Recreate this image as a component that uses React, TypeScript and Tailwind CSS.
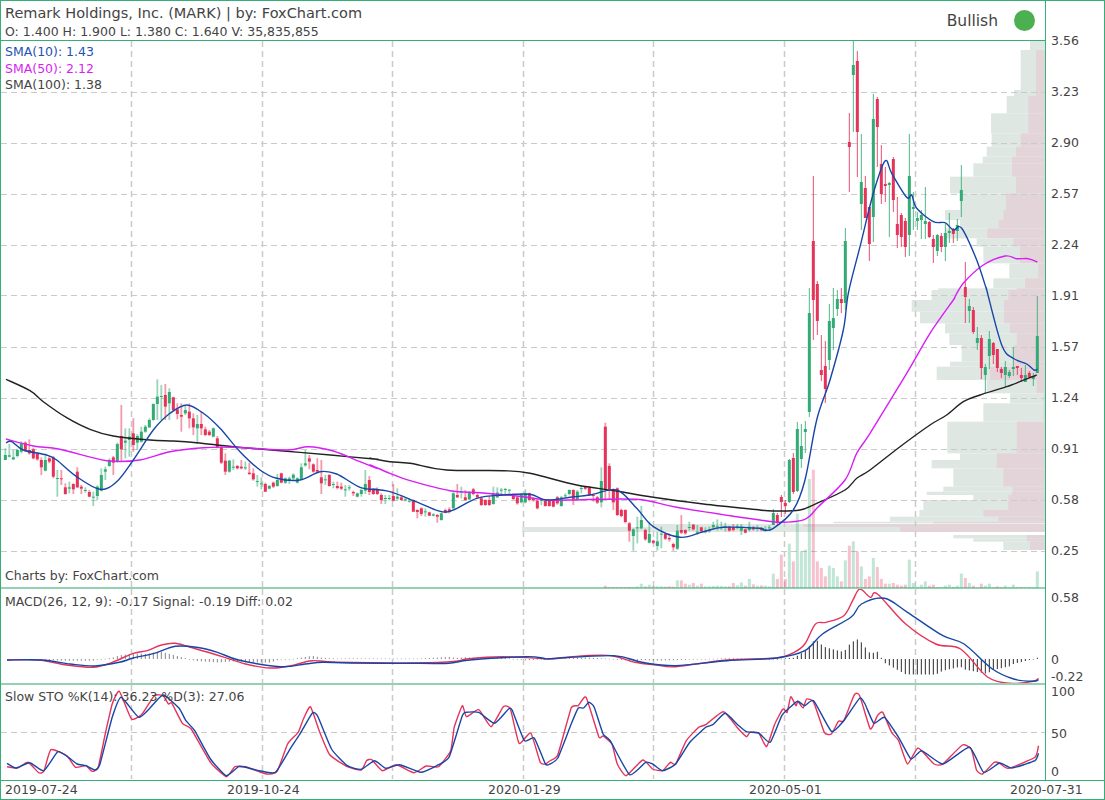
const RED = "#e6335a";
const GREEN = "#33ab74";
const BLUE = "#1747a6";
const MAGENTA = "#d81ef5";

// candles read off the picture: xz color bodyTop bodyBottom wickTop wickBottom
type Candle = { x: number; up: boolean; t: number; b: number; wt: number; wb: number; pale: boolean };

const LEFT = `16 g 255 270 235 270,28 g 256 260 222 262,40 g 262 268 240 270,52 g 240 258 236 262,64 g 220 245 214 250,76 r 218 243 214 246,88 r 240 250 208 254,100 r 238 265 234 268,112 r 250 268 246 272,124 r 270 292 262 315,136 g 270 302 250 304,148 r 265 275 258 280,160 r 262 320 258 325,172 g 324 326 300 380,184 r 325 328 300 345,196 r 352 372 340 374,208 g 352 356 335 370,220 r 342 358 340 372,232 r 305 352 292 354,244 r 350 356 345 372,256 g 360 362 352 368,268 r 366 380 360 382,280 g 380 382 365 408,292 g 350 378 346 390,304 g 315 362 295 364,316 g 298 305 290 330,328 g 270 288 265 290,340 r 262 278 258 315,352 g 222 275 218 278,364 r 198 238 105 275,376 g 212 218 175 265,388 g 200 210 175 260,400 r 190 225 145 245,412 g 198 218 192 240,424 g 185 215 170 218,436 g 170 185 165 188,448 g 150 172 145 174,460 g 102 150 100 152,472 g 80 102 28 150,484 g 78 80 45 150,496 r 75 110 42 150,508 g 66 100 55 150,520 r 82 120 80 125,532 r 118 132 100 148,544 r 135 140 100 185,556 g 120 130 105 135,568 r 125 145 100 175,580 r 145 172 130 195,592 g 162 175 135 222,604 r 162 175 125 195,616 r 178 195 170 198,628 r 185 195 180 198,640 g 175 200 172 202,652 r 205 232 198 235,664 r 232 278 228 282,676 r 272 305 250 315,688 g 272 305 270 308,700 g 290 292 268 300,712 r 288 295 285 298,724 r 290 295 270 298,736 g 292 294 275 300,748 r 308 312 278 315,760 r 310 328 295 332,772 g 333 335 315 350,784 g 340 342 322 358,796 r 342 365 338 366,808 g 348 356 345 358,820 r 338 350 335 354,832 g 330 348 312 350,844 r 310 338 308 340,856 g 325 338 322 342,868 g 325 330 320 342,880 g 314 325 310 330,892 g 325 338 322 340,904 g 292 328 280 330,916 g 280 286 240 290,928 r 265 275 255 298,940 r 283 305 280 308,952 r 300 305 265 310,964 r 322 340 270 372,976 g 328 330 315 345,988 r 315 348 312 350,1000 g 342 344 335 355,1012 r 348 354 335 358,1024 r 350 356 338 360,1036 g 358 360 345 380,1048 g 352 354 345 362,1060 r 366 370 362 378,1072 g 370 380 368 382,1084 g 360 372 356 380,1096 g 342 362 300 372,1108 r 330 366 318 375,1120 r 358 372 354 375,1132 r 358 372 352 375`;

const MID = `34 r 255 270 250 282,46 g 264 266 255 282,58 g 264 266 255 272,70 r 258 272 222 274,82 g 260 266 235 272,94 r 262 270 258 272,106 g 268 270 262 274,118 g 272 274 265 278,130 r 270 305 268 306,142 r 300 306 298 325,154 r 295 312 292 318,166 g 304 306 295 320,178 r 307 317 305 318,190 g 313 317 310 319,202 r 315 320 312 338,214 g 310 330 308 332,226 r 300 308 296 310,238 r 298 306 292 310,250 g 250 295 246 297,262 r 255 262 222 264,274 g 244 246 230 265,286 r 262 270 240 272,298 g 248 268 244 270,310 r 238 252 234 256,322 r 255 262 250 264,334 r 265 285 260 288,346 r 270 285 268 288,358 r 270 285 258 288,370 g 250 282 230 284,382 g 248 262 232 264,394 g 239 241 234 256,406 g 237 239 234 258,418 g 239 241 238 255,430 r 255 267 250 270,442 r 262 280 258 284,454 g 253 277 250 280,466 g 250 277 238 280,478 r 250 270 248 274,490 r 265 270 262 275,502 r 272 295 268 298,514 g 270 273 266 285,526 r 273 288 270 290,538 r 273 288 270 290,550 r 270 290 268 292,562 r 262 280 258 284,574 g 262 288 258 290,586 g 256 258 250 264,598 g 240 252 238 256,610 r 240 268 238 285,622 g 245 268 240 272,634 g 234 236 225 250,646 r 230 236 228 240,658 r 232 255 228 258,670 r 255 258 252 275,682 r 262 278 258 282,694 g 213 277 172 292,706 r 50 240 38 270,718 r 168 238 160 268,730 r 238 277 235 300,742 r 235 315 232 318,754 r 300 318 296 322,766 r 300 336 298 340,778 r 340 362 336 395,790 g 358 378 355 422,802 g 352 354 320 400,814 g 330 355 288 358,826 r 360 388 356 392,838 g 372 398 335 400,850 r 392 398 390 402,862 g 394 408 365 422,874 g 371 373 350 415,886 r 372 386 368 390,898 r 384 388 370 395,910 r 402 412 398 422,922 g 362 416 345 420,934 r 360 368 315 372,946 r 360 370 358 374,958 g 351 353 335 362,970 r 344 358 342 362,982 g 365 367 345 374,994 r 352 364 350 368,1006 g 364 366 352 370,1018 g 361 363 350 368,1030 g 345 352 335 358,1042 g 349 351 328 362,1054 g 351 353 335 360,1066 g 349 351 338 365,1078 r 350 362 348 365,1090 r 352 360 342 364,1102 g 349 351 342 358,1114 g 350 362 342 375,1126 r 358 368 356 370,1138 g 350 360 335 365,1150 r 352 358 348 362,1162 g 354 356 345 364,1174 r 355 360 352 364,1186 g 357 359 348 366,1198 g 352 354 345 362`;

// these y values are already page pixels
const RIGHT = `40 g 513 525 509 525,52 r 515 523 513 525,64 r 497 502 495 517,76 r 503 506 500 514,88 g 460 502 459 503,100 r 458 492 453 494,112 g 429 491 422 492,124 g 446 459 424 468,136 g 429 432 421 453,148 g 313 412 288 417,160 r 241 300 176 340,172 r 284 321 281 335,184 r 370 375 335 381,196 r 366 389 341 403,208 g 321 360 304 370,220 g 318 328 288 350,232 g 299 309 290 316,244 r 299 303 288 313,256 g 241 303 228 310,268 r 142 147 113 192,280 g 65 75 40 132,292 r 61 132 51 177,304 g 182 204 134 230,316 r 188 218 176 218,328 r 207 244 218 261,340 g 119 217 94 242,352 r 99 127 97 167,364 r 164 194 145 204,376 r 184 186 167 202,388 g 183 185 182 237,400 r 159 200 157 212,412 r 224 235 197 248,424 r 215 237 213 247,436 r 221 247 218 257,448 g 176 235 134 256,460 g 207 209 192 230,472 g 218 221 212 230,484 g 215 220 210 239,496 g 221 224 187 239,508 r 222 237 221 238,520 r 239 247 235 263,532 g 235 251 234 256,544 r 236 247 233 252,556 g 233 247 224 261,568 g 231 233 213 243,580 r 230 234 228 243,592 g 225 231 219 241,604 g 190 201 165 217,616 r 287 297 262 323,628 g 306 311 299 323,640 r 310 332 307 334,652 g 338 343 327 350,664 r 338 368 335 379,676 g 367 375 364 393,688 g 339 356 331 369,700 r 343 355 342 364,712 r 349 368 349 372,724 r 369 373 367 378,736 g 367 375 361 387,748 g 372 376 370 378,760 g 367 369 347 376,772 r 366 368 366 375,784 r 375 378 368 382,796 g 375 382 365 382,808 r 373 377 371 378,820 g 377 379 373 386,832 g 336 373 296 373`;

function parseCandles(src: string, x0: number, y0: number, sy: number, pale: boolean): Candle[] {
  return src.split(",").map((s) => {
    const p = s.trim().split(" ");
    const n = (k: number) => y0 + Number(p[k]) / sy;
    return { x: x0 + Number(p[0]) / 3, up: p[1] === "g", t: n(2), b: n(3), wt: n(4), wb: n(5), pale };
  });
}

const candles: Candle[] = [
  ...parseCandles(LEFT, 0, 370, 3, true),
  ...parseCandles(MID, 370, 410, 3, true),
  ...parseCandles(RIGHT, 760, 0, 1, false),
];

const isUp = (x: number) => {
  let best = candles[0];
  for (const c of candles) if (Math.abs(c.x - x) < Math.abs(best.x - x)) best = c;
  return best.up;
};

const VOL_MID = [706, 528, 718, 533, 730, 533, 742, 533, 754, 533, 766, 533, 778, 532, 790, 532, 802, 530, 814, 522, 826, 530, 838, 525, 850, 530, 862, 530, 874, 530, 886, 531, 898, 530, 910, 531, 922, 512, 934, 512, 946, 522, 958, 525, 970, 520, 982, 528, 994, 522, 1006, 530, 1018, 530, 1030, 529, 1042, 528, 1054, 529, 1066, 530, 1078, 530, 1090, 520, 1102, 527, 1114, 518, 1126, 528, 1138, 508, 1150, 524, 1162, 528, 1174, 527, 1186, 528, 1198, 530];
const VOL_RIGHT = [40, 852, 52, 868, 64, 795, 76, 868, 88, 762, 100, 815, 112, 672, 124, 785, 136, 780, 148, 568, 160, 540, 172, 815, 184, 835, 196, 860, 208, 828, 220, 835, 232, 860, 244, 875, 256, 812, 268, 768, 280, 755, 292, 785, 304, 830, 316, 868, 328, 860, 340, 805, 352, 832, 364, 868, 376, 882, 388, 882, 400, 880, 412, 885, 424, 888, 436, 885, 448, 810, 460, 880, 472, 892, 484, 885, 496, 875, 508, 888, 520, 885, 532, 892, 544, 893, 556, 888, 568, 885, 580, 892, 592, 888, 604, 852, 616, 865, 628, 880, 640, 888, 652, 893, 664, 882, 676, 888, 688, 882, 700, 893, 712, 890, 724, 893, 736, 888, 748, 893, 760, 885, 772, 893, 784, 893, 796, 893, 808, 893, 820, 893, 832, 845];

const volumes: { x: number; h: number }[] = [];
for (let i = 0; i < VOL_MID.length; i += 2) volumes.push({ x: 370 + VOL_MID[i] / 3, h: (535 - VOL_MID[i + 1]) / 3 });
for (let i = 0; i < VOL_RIGHT.length; i += 2) volumes.push({ x: 760 + VOL_RIGHT[i] / 3, h: (895 - VOL_RIGHT[i + 1]) / 3 });

// volume profile rows: top bottom grayLeft pinkLeft
const PROFILE_TOP = [[122, 150, 810, 856], [150, 270, 782, 828], [270, 288, 762, 828], [288, 340, 740, 805], [340, 400, 693, 805], [400, 440, 695, 782], [440, 470, 680, 768], [470, 490, 668, 756], [490, 530, 640, 756], [530, 580, 570, 768], [580, 630, 600, 738], [630, 660, 555, 730], [660, 685, 600, 716], [685, 715, 555, 682], [715, 740, 650, 760], [740, 790, 670, 780], [790, 835, 748, 835], [835, 865, 700, 795], [865, 900, 535, 770]];
const PROFILE_BOT = [[0, 30, 515, 745], [30, 65, 455, 732], [65, 100, 480, 732], [100, 130, 555, 750], [130, 165, 568, 770], [165, 215, 605, 762], [215, 230, 570, 762], [230, 270, 530, 690], [270, 310, 680, 830], [310, 340, 750, 850], [340, 395, 670, 850], [395, 490, 562, 770], [490, 510, 600, 710], [510, 535, 515, 710], [535, 590, 580, 730], [590, 605, 550, 758], [605, 615, 500, 755], [615, 630, 640, 745], [630, 660, 490, 745], [660, 680, 478, 670], [680, 695, 390, 715], [695, 700, 220, 520], [735, 745, 580, 800], [745, 755, 640, 800], [755, 780, 730, 810]];
const profile: { y: number; h: number; gray: number; pink: number }[] = [
  ...PROFILE_TOP.map(([a, b, g, p]) => ({ y: a / 3, h: (b - a) / 3, gray: 760 + g / 3, pink: 760 + p / 3 })),
  ...PROFILE_BOT.map(([a, b, g, p]) => ({ y: 290 + a / 3, h: (b - a) / 3, gray: 760 + g / 3, pink: 760 + p / 3 })),
  { y: 524, h: 3, gray: 653, pink: 803 },
  { y: 527, h: 5, gray: 522, pink: 900 },
];

// polylines from the crops, as flat x,y lists
const pts = (flat: number[], x0: number, y0: number, sx = 3, sy = 3) => {
  const out: [number, number][] = [];
  for (let i = 0; i < flat.length; i += 2) out.push([x0 + flat[i] / sx, y0 + flat[i + 1] / sy]);
  return out;
};

// catmull-rom through the points so the averages don't look angular
const smooth = (p: [number, number][], k: number) => {
  let d = `M${p[0][0].toFixed(1)} ${p[0][1].toFixed(1)}`;
  for (let i = 0; i < p.length - 1; i++) {
    const a = p[Math.max(i - 1, 0)];
    const b = p[i];
    const c = p[i + 1];
    const e = p[Math.min(i + 2, p.length - 1)];
    const c1x = b[0] + ((c[0] - a[0]) * k) / 6;
    const c1y = b[1] + ((c[1] - a[1]) * k) / 6;
    const c2x = c[0] - ((e[0] - b[0]) * k) / 6;
    const c2y = c[1] - ((e[1] - b[1]) * k) / 6;
    d += `C${c1x.toFixed(1)} ${c1y.toFixed(1)} ${c2x.toFixed(1)} ${c2y.toFixed(1)} ${c[0].toFixed(1)} ${c[1].toFixed(1)}`;
  }
  return d;
};

const sma100 = [
  ...pts([18, 28, 90, 62, 130, 95, 200, 143, 270, 178, 340, 198, 450, 210, 520, 213, 590, 218, 700, 230, 850, 243, 1000, 256, 1130, 268], 0, 370),
  ...pts([0, 145, 60, 155, 120, 160, 230, 180, 400, 182, 480, 190, 620, 225, 740, 243, 850, 262, 1000, 282, 1170, 300], 370, 410),
  ...pts([0, 660, 40, 663, 120, 660, 175, 638, 255, 600, 290, 565, 330, 540, 420, 470, 510, 405, 560, 375, 610, 335, 660, 315, 740, 290, 830, 255], 760, 290),
];
const sma50 = [
  ...pts([18, 207, 100, 228, 180, 238, 320, 272, 420, 270, 510, 245, 610, 233, 700, 232, 860, 240, 925, 230, 1000, 243, 1080, 275, 1130, 295], 0, 370),
  ...pts([0, 165, 60, 190, 120, 212, 240, 242, 330, 248, 440, 258, 530, 270, 600, 270, 800, 268, 920, 292, 1100, 320, 1170, 330], 370, 410),
  ...pts([0, 690, 60, 697, 135, 688, 175, 650, 255, 570, 290, 490, 330, 430, 440, 250, 510, 130, 580, 30], 760, 290),
  ...pts([580, 900, 610, 850, 670, 795, 735, 768, 770, 776, 805, 776, 832, 786], 760, 0),
];
const sma10 = [
  ...pts([18, 218, 35, 215, 70, 240, 140, 255, 170, 270, 230, 320, 300, 358, 350, 335, 400, 270, 460, 180, 510, 130, 560, 105, 610, 130, 660, 175, 720, 245, 780, 300, 830, 325, 900, 330, 960, 305, 1010, 312, 1080, 352, 1130, 358], 0, 370),
  ...pts([0, 238, 60, 245, 150, 280, 230, 306, 320, 265, 400, 255, 480, 253, 530, 270, 600, 262, 660, 255, 740, 240, 800, 295, 850, 350, 930, 382, 1000, 365, 1060, 352, 1170, 355], 370, 410),
  ...pts([10, 720, 40, 715, 100, 660, 135, 570, 170, 390, 210, 270, 250, 120], 760, 290),
  ...pts([265, 880, 300, 740, 340, 580, 375, 483, 395, 520, 440, 592, 455, 585, 470, 625, 520, 665, 555, 668, 580, 690, 605, 685, 650, 780, 680, 870], 760, 0),
  ...pts([680, 0, 725, 165, 760, 205, 800, 222, 822, 240, 832, 238], 760, 290),
];

const X6 = 1568 / 550;
const X7 = 1568 / 555;
const macdRed = [
  ...pts([20, 228, 110, 228, 190, 243, 265, 250, 320, 235, 380, 208, 420, 200, 460, 183, 500, 178, 560, 195, 640, 220, 700, 240, 770, 252, 830, 245, 890, 230, 960, 235, 1190, 237, 1300, 232, 1330, 225, 1430, 218, 1550, 224], 0, 585, X6),
  ...pts([0, 224, 100, 215, 175, 215, 240, 235, 300, 243, 355, 248, 500, 228, 640, 222, 690, 205, 720, 180, 750, 120, 780, 115, 830, 95, 855, 50, 875, 15, 905, 40, 925, 30, 1005, 120, 1090, 180, 1160, 195, 1235, 278, 1300, 298, 1365, 292, 1380, 283], 550, 585, X7),
];
const macdBlue = [
  ...pts([20, 228, 120, 228, 200, 240, 270, 246, 340, 235, 380, 222, 440, 208, 500, 187, 560, 190, 620, 205, 680, 228, 800, 248, 870, 240, 920, 235, 1000, 237, 1200, 238, 1280, 238, 1340, 228, 1500, 218, 1550, 223], 0, 585, X6),
  ...pts([0, 224, 180, 215, 260, 235, 355, 245, 500, 230, 640, 222, 720, 200, 770, 150, 850, 100, 880, 60, 945, 43, 1010, 85, 1110, 155, 1170, 180, 1250, 255, 1310, 285, 1365, 292, 1380, 287], 550, 585, X7),
];
const stoRed = [
  ...pts([20, 548, 50, 552, 80, 535, 110, 566, 125, 562, 145, 497, 190, 515, 215, 550, 245, 545, 262, 562, 280, 550, 300, 450, 320, 360, 340, 322, 375, 405, 405, 390, 440, 335, 465, 335, 480, 360, 490, 358, 520, 418, 545, 435, 600, 535, 645, 578, 670, 548, 700, 548, 760, 570, 790, 562, 820, 480, 850, 445, 865, 405, 885, 368, 910, 440, 940, 512, 990, 548, 1030, 558, 1045, 530, 1060, 527, 1090, 560, 1130, 542, 1180, 566, 1215, 546, 1250, 548, 1285, 500, 1295, 430, 1318, 365, 1330, 398, 1365, 377, 1400, 428, 1435, 368, 1455, 375, 1480, 478, 1513, 447, 1540, 535, 1555, 540], 0, 585, X6),
  ...pts([0, 530, 22, 512, 60, 372, 80, 365, 102, 340, 138, 458, 150, 456, 175, 480, 190, 540, 215, 575, 262, 528, 290, 555, 318, 560, 340, 535, 355, 540, 385, 470, 420, 430, 440, 422, 490, 383, 530, 432, 555, 458, 565, 445, 590, 448, 612, 488, 635, 420, 658, 375, 670, 385, 680, 338, 695, 365, 700, 352, 715, 372, 725, 345, 745, 355, 775, 445, 795, 450, 815, 412, 830, 410, 860, 332, 875, 335, 905, 435, 925, 395, 940, 385, 965, 445, 985, 470, 1010, 540, 1040, 492, 1085, 540, 1110, 540, 1165, 483, 1190, 495, 1205, 558, 1222, 570, 1255, 535, 1270, 537, 1295, 553, 1370, 520, 1380, 485], 550, 585, X7),
];
const stoBlue = [
  ...pts([20, 538, 45, 552, 85, 536, 125, 560, 165, 503, 195, 520, 220, 540, 245, 545, 270, 558, 285, 540, 320, 400, 345, 340, 395, 400, 425, 375, 465, 333, 510, 372, 530, 410, 555, 440, 600, 525, 645, 575, 680, 548, 700, 550, 740, 560, 785, 565, 830, 490, 855, 450, 890, 388, 905, 395, 945, 495, 990, 545, 1030, 556, 1068, 530, 1100, 553, 1140, 542, 1200, 565, 1245, 545, 1280, 520, 1318, 395, 1330, 385, 1365, 385, 1410, 418, 1450, 375, 1460, 378, 1495, 470, 1523, 462, 1555, 540], 0, 585, X6),
  ...pts([0, 540, 22, 522, 60, 420, 80, 372, 95, 372, 110, 355, 125, 370, 150, 450, 170, 470, 225, 572, 270, 535, 290, 540, 318, 560, 355, 540, 395, 475, 440, 430, 460, 422, 495, 388, 530, 422, 555, 443, 590, 447, 622, 475, 655, 395, 680, 368, 700, 352, 720, 365, 745, 350, 795, 442, 830, 410, 875, 343, 890, 360, 915, 418, 945, 400, 985, 460, 1020, 525, 1050, 500, 1110, 540, 1185, 490, 1225, 565, 1270, 537, 1305, 552, 1370, 530, 1380, 508], 550, 585, X7),
];

// y on a polyline at x
const yAt = (line: [number, number][], x: number) => {
  for (let i = 1; i < line.length; i++) {
    const [ax, ay] = line[i - 1];
    const [bx, by] = line[i];
    if (x >= ax && x <= bx) return bx === ax ? ay : ay + ((by - ay) * (x - ax)) / (bx - ax);
  }
  return line[line.length - 1][1];
};

const histogram: { x: number; h: number }[] = [];
for (let i = 8; i < 259; i++) {
  const x = 5.33 + 4 * i;
  histogram.push({ x, h: (yAt(macdBlue, x) - yAt(macdRed, x)) * 1.2 });
}

const GRID_X = [131, 262, 392, 523, 653, 784, 915];
const GRID_Y = [92, 143, 194, 245, 295, 347, 398, 449, 500, 551];
const MAIN_LABELS = ["3.56", "3.23", "2.90", "2.57", "2.24", "1.91", "1.57", "1.24", "0.91", "0.58", "0.25"];

function VGrid({ y1, y2 }: { y1: number; y2: number }) {
  return (
    <>
      {GRID_X.map((x) => (
        <line key={x} x1={x + 0.5} x2={x + 0.5} y1={y1} y2={y2} stroke="#cacaca" strokeWidth={1.5} strokeDasharray="6 4" />
      ))}
    </>
  );
}

function Line({ points, color, width = 1.4, k = 1 }: { points: [number, number][]; color: string; width?: number; k?: number }) {
  return <path d={smooth(points, k)} fill="none" stroke={color} strokeWidth={width} strokeLinejoin="round" />;
}

function MainChart() {
  return (
    <svg className="block h-[547px] w-[1044px]" viewBox="1 41 1044 547">
      {profile.map((r, i) => (
        <g key={i}>
          <rect x={r.gray} y={r.y} width={1045 - r.gray} height={r.h} fill="#dfe7e3" />
          {r.pink < 1045 && <rect x={r.pink} y={r.y} width={1045 - r.pink} height={r.h} fill="#e3d4da" />}
        </g>
      ))}
      {GRID_Y.map((y) => (
        <line key={y} x1={1} x2={1045} y1={y + 0.5} y2={y + 0.5} stroke="#cacaca" strokeWidth={1.2} strokeDasharray="6 4" />
      ))}
      <VGrid y1={41} y2={588} />
      {volumes.map((v, i) => (
        <rect key={i} x={v.x - 1.5} y={588 - v.h} width={3} height={v.h} fill={isUp(v.x) ? GREEN : RED} opacity={0.3} />
      ))}
      {candles.map((c, i) => (
        <g key={i} fill={c.up ? GREEN : RED}>
          <rect
            x={c.x - (c.pale ? 0.9 : 0.5)}
            y={c.wt}
            width={c.pale ? 1.8 : 1}
            height={c.wb - c.wt}
            opacity={c.pale ? 0.5 : 0.85}
          />
          <rect x={c.x - 1.5} y={c.t} width={3} height={Math.max(c.b - c.t, 1)} />
        </g>
      ))}
      <Line points={sma100} color="#222222" />
      <Line points={sma50} color={MAGENTA} />
      <Line points={sma10} color={BLUE} />
    </svg>
  );
}

function MacdChart() {
  return (
    <svg className="block h-[94px] w-[1044px]" viewBox="1 590 1044 94">
      <VGrid y1={590} y2={684} />
      {histogram.map((b, i) => (
        <rect
          key={i}
          x={b.x - 0.5}
          y={b.h > 0 ? 660 - b.h : 660}
          width={1}
          height={Math.max(Math.abs(b.h), 0.6)}
          fill="#222222"
          opacity={i < 180 ? 0.55 : 0.95}
        />
      ))}
      <Line points={macdRed} color={RED} />
      <Line points={macdBlue} color={BLUE} />
    </svg>
  );
}

function StoChart() {
  return (
    <svg className="block h-[94px] w-[1044px]" viewBox="1 686 1044 94">
      <line x1={1} x2={1045} y1={733.5} y2={733.5} stroke="#cacaca" strokeWidth={1.2} strokeDasharray="6 4" />
      <VGrid y1={686} y2={780} />
      <Line points={stoRed} color={RED} k={0.5} />
      <Line points={stoBlue} color={BLUE} k={0.5} />
    </svg>
  );
}

export default function App() {
  return (
    <div className="flex h-[800px] w-[1105px] flex-col border border-[#36ae78] bg-white font-['DejaVu_Sans',sans-serif] text-[12.5px] leading-4 text-[#444]">
      <div className="flex h-[779px]">
        <div className="flex w-[1045px] flex-col border-r border-[#36ae78]">
          <div className="flex h-[40px] items-start justify-between border-b border-[#36ae78] pl-[4px] pr-[10px]">
            <div>
              <div className="mt-[3px] text-[14.5px] leading-[18px]">Remark Holdings, Inc. (MARK) | by: FoxChart.com</div>
              <div className="mt-[2px] text-[12.5px] leading-[15px]">O: 1.400 H: 1.900 L: 1.380 C: 1.640 V: 35,835,855</div>
            </div>
            <div className="mt-[9px] flex items-center gap-[16px] text-[15.5px]">
              <span>Bullish</span>
              <span className="h-[21px] w-[21px] rounded-full bg-[#4caf50]"></span>
            </div>
          </div>
          <div className="relative h-[548px] border-b-2 border-[#93d1b4]">
            <MainChart />
            <div className="absolute left-[4px] top-[3px] flex flex-col leading-[16.5px]">
              <span className="text-[#1f52b4]">SMA(10): 1.43</span>
              <span className="text-[#d81ef5]">SMA(50): 2.12</span>
              <span>SMA(100): 1.38</span>
            </div>
            <span className="absolute left-[4px] top-[527px]">Charts by: FoxChart.com</span>
          </div>
          <div className="relative h-[96px] border-b-2 border-[#93d1b4]">
            <MacdChart />
            <span className="absolute left-[4px] top-[5px]">MACD(26, 12, 9): -0.17 Signal: -0.19 Diff: 0.02</span>
          </div>
          <div className="relative h-[94px]">
            <StoChart />
            <span className="absolute left-[4px] top-[4px]">Slow STO %K(14): 36.23 %D(3): 27.06</span>
          </div>
        </div>
        <div className="flex flex-col pl-[5px]">
          <div className="h-[14px]"></div>
          {MAIN_LABELS.map((l) => (
            <div key={l} className="flex h-[51px] items-center">{l}</div>
          ))}
          <div className="mt-[14px] h-4">0.58</div>
          <div className="mt-[46px] h-4">0</div>
          <div className="mt-[1px] h-4">-0.22</div>
          <div className="mt-[-1px] h-4">100</div>
          <div className="mt-[26px] h-4">50</div>
          <div className="mt-[22px] h-4">0</div>
        </div>
      </div>
      <div className="flex h-[19px] items-center border-t border-[#36ae78] pl-[4px]">
        <span className="w-[222px]">2019-07-24</span>
        <span className="w-[261px]">2019-10-24</span>
        <span className="w-[261px]">2020-01-29</span>
        <span className="w-[261px]">2020-05-01</span>
        <span>2020-07-31</span>
      </div>
    </div>
  );
}
